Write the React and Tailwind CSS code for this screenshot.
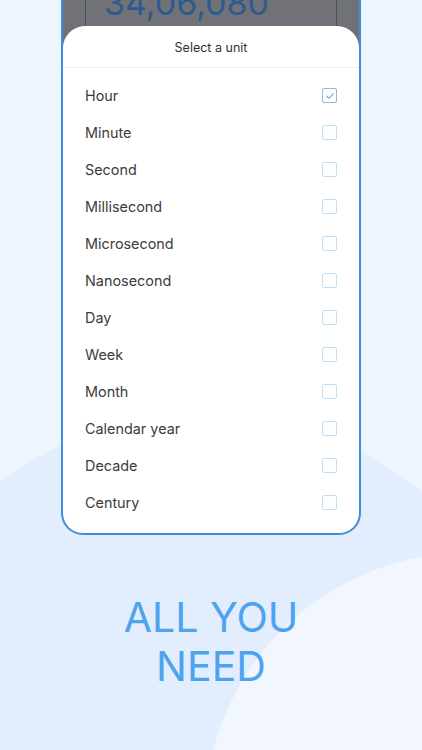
import React from "react";

const units = [
  "Hour",
  "Minute",
  "Second",
  "Millisecond",
  "Microsecond",
  "Nanosecond",
  "Day",
  "Week",
  "Month",
  "Calendar year",
  "Decade",
  "Century",
];

function Checkbox({ checked }) {
  return (
    <div
      className={
        "w-[15px] h-[15px] rounded-[2px] border-[1.5px] flex items-center justify-center " +
        (checked ? "border-[#8db8e6]" : "border-[#bfe0f6]")
      }
    >
      {checked && (
        <svg width="10" height="10" viewBox="0 0 10 10" fill="none">
          <path d="M1.8 5.2 L4 7.2 L8.3 2.8" stroke="#7ea8da" strokeWidth="1.2" strokeLinecap="round" strokeLinejoin="round" />
        </svg>
      )}
    </div>
  );
}

export default function App() {
  return (
    <div
      className="relative w-[422px] h-[750px] overflow-hidden bg-[#eef5fe]"
      style={{ fontFamily: "Inter, 'Noto Sans', sans-serif" }}
    >
      <svg className="absolute inset-0" width="422" height="750" viewBox="0 0 422 750">
        <path d="M0 482 Q 211 330 422 492 L422 750 L0 750 Z" fill="#e2edfd" />
        <path d="M213 750 C 240 650 320 575 422 557 L422 750 Z" fill="#f2f7ff" />
      </svg>

      <div className="relative flex flex-col items-center">
        <div className="w-[300px] border-2 border-t-0 border-[#3a8fe1] rounded-b-[22px] bg-[#707277] overflow-hidden">
          <div className="h-[26px] relative flex">
            <div className="ml-[22px] w-[252px] h-full border-x border-[#4a5260] overflow-hidden relative">
              <div className="absolute left-[18px] top-[-14px] text-[34px] leading-none text-[#2e5b8f]">
                34,06,080
              </div>
            </div>
          </div>
          <div className="bg-white rounded-t-[22px]">
            <div className="h-[42px] pt-[3px] flex items-center justify-center border-b border-[#eeeeee] text-[12.5px] text-[#333333]">
              Select a unit
            </div>
            <div className="pt-[9px] pb-[12px]">
              {units.map((u, i) => (
                <div key={u} className="h-[37px] flex items-center justify-between pl-[22px] pr-[22px]">
                  <span className="text-[14.4px] text-[#3c3c3c]">{u}</span>
                  <Checkbox checked={i === 0} />
                </div>
              ))}
            </div>
          </div>
        </div>

        <div className="mt-[58px] text-center text-[41px] leading-[49px] text-[#4ea3ee]">
          <div>ALL YOU</div>
          <div>NEED</div>
        </div>
      </div>
    </div>
  );
}
